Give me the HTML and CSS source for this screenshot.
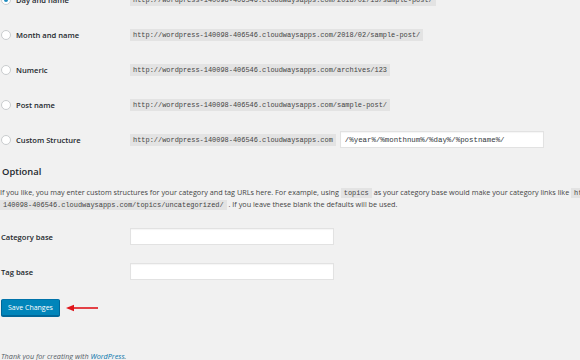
FILE: index.html
```html
<!DOCTYPE html>
<html lang="en">
<head>
  <meta charset="UTF-8" />
  <meta name="viewport" content="width=device-width, initial-scale=1.0"/>
  <title>Permalink Settings</title>
  <link rel="stylesheet" href="styles.css">
</head>
<body>

  <div class="wrap">

    <div class="perma-list">
      <div class="row">
        <label class="choice"><span class="radio checked"></span>Day and name</label>
        <code>http://wordpress-140098-406546.cloudwaysapps.com/2018/02/13/sample-post/</code>
      </div>
      <div class="row">
        <label class="choice"><span class="radio"></span>Month and name</label>
        <code>http://wordpress-140098-406546.cloudwaysapps.com/2018/02/sample-post/</code>
      </div>
      <div class="row">
        <label class="choice"><span class="radio"></span>Numeric</label>
        <code>http://wordpress-140098-406546.cloudwaysapps.com/archives/123</code>
      </div>
      <div class="row">
        <label class="choice"><span class="radio"></span>Post name</label>
        <code>http://wordpress-140098-406546.cloudwaysapps.com/sample-post/</code>
      </div>
      <div class="row">
        <label class="choice"><span class="radio"></span>Custom Structure</label>
        <code>http://wordpress-140098-406546.cloudwaysapps.com</code>
        <input class="text custom" type="text" value="/%year%/%monthnum%/%day%/%postname%/">
      </div>
    </div>

    <h2>Optional</h2>
    <p class="note">
      If you like, you may enter custom structures for your category and tag URLs here. For example, using <code>topics</code> as your category base would make your category links like <code>http://wordpress-</code><br><code>140098-406546.cloudwaysapps.com/topics/uncategorized/</code> . If you leave these blank the defaults will be used.
    </p>

    <div class="row">
      <label class="field-label">Category base</label>
      <input class="text" type="text">
    </div>
    <div class="row">
      <label class="field-label">Tag base</label>
      <input class="text" type="text">
    </div>

    <div class="submit">
      <button class="primary">Save Changes</button>
      <svg class="arrow" width="34" height="8" viewBox="0 0 34 8">
        <path d="M6 4 H32" stroke="#e0151b" stroke-width="1.6" />
        <path d="M0 4 L8 0.8 L8 7.2 Z" fill="#e0151b" />
      </svg>
    </div>

    <p class="footer">Thank you for creating with <a href="#">WordPress</a>.</p>

  </div>

</body>
</html>
```

FILE: styles.css
```css
body {
  margin: 0;
  background: #f1f1f1;
  color: #444;
  font-family: "Open Sans", "Liberation Sans", sans-serif;
  font-size: 7.25px;
  overflow: hidden;
}

.wrap {
  padding-left: 1px;
}

.perma-list {
  margin-top: -18px;
}

.row {
  display: flex;
  align-items: center;
  height: 35px;
}

.choice,
.field-label {
  display: flex;
  align-items: center;
  width: 129px;
  flex-shrink: 0;
  font-weight: 600;
  font-size: 7.6px;
  color: #23282d;
}

.radio {
  width: 8px;
  height: 8px;
  border: 1px solid #c9ccce;
  border-radius: 50%;
  background: #fff;
  margin-right: 5px;
  position: relative;
}

.radio.checked::after {
  content: "";
  position: absolute;
  left: 2px;
  top: 2px;
  width: 4px;
  height: 4px;
  border-radius: 50%;
  background: #1e8cbe;
}

code {
  font-family: "Liberation Mono", monospace;
  font-size: 6.95px;
  background: #e3e3e3;
  color: #444;
  padding: 2px 3px;
  white-space: nowrap;
}

.text {
  box-sizing: border-box;
  width: 204px;
  height: 17px;
  border: 1px solid #e2e2e2;
  background: #fff;
  box-shadow: inset 0 1px 1px rgba(0,0,0,0.04);
  padding: 0 4px;
  margin: 0;
  font-family: "Liberation Mono", monospace;
  font-size: 7.4px;
  color: #32373c;
  outline: none;
}

.text.custom {
  margin-left: 4px;
}

h2 {
  margin: 8px 0 0 1px;
  font-size: 9.4px;
  font-weight: 600;
  line-height: 13px;
  color: #23282d;
}

.note {
  margin: 9px 0 8px -1px;
  line-height: 11px;
  white-space: nowrap;
}

.note code {
  padding: 1px 3px;
}

.submit {
  display: flex;
  align-items: center;
  gap: 6px;
  margin-top: 10px;
}

.primary {
  height: 17px;
  padding: 0 6px;
  background: #0085ba;
  border: 1px solid #0073aa;
  border-color: #0073aa #006799 #006799;
  border-radius: 2px;
  box-shadow: 0 1px 0 #006799;
  color: #fff;
  font-family: "Open Sans", "Liberation Sans", sans-serif;
  font-size: 7px;
  cursor: pointer;
}

.footer {
  margin: 35px 0 0;
  line-height: 11px;
  font-style: italic;
  color: #555d66;
}

.footer a {
  color: #0073aa;
  text-decoration: none;
}
```
